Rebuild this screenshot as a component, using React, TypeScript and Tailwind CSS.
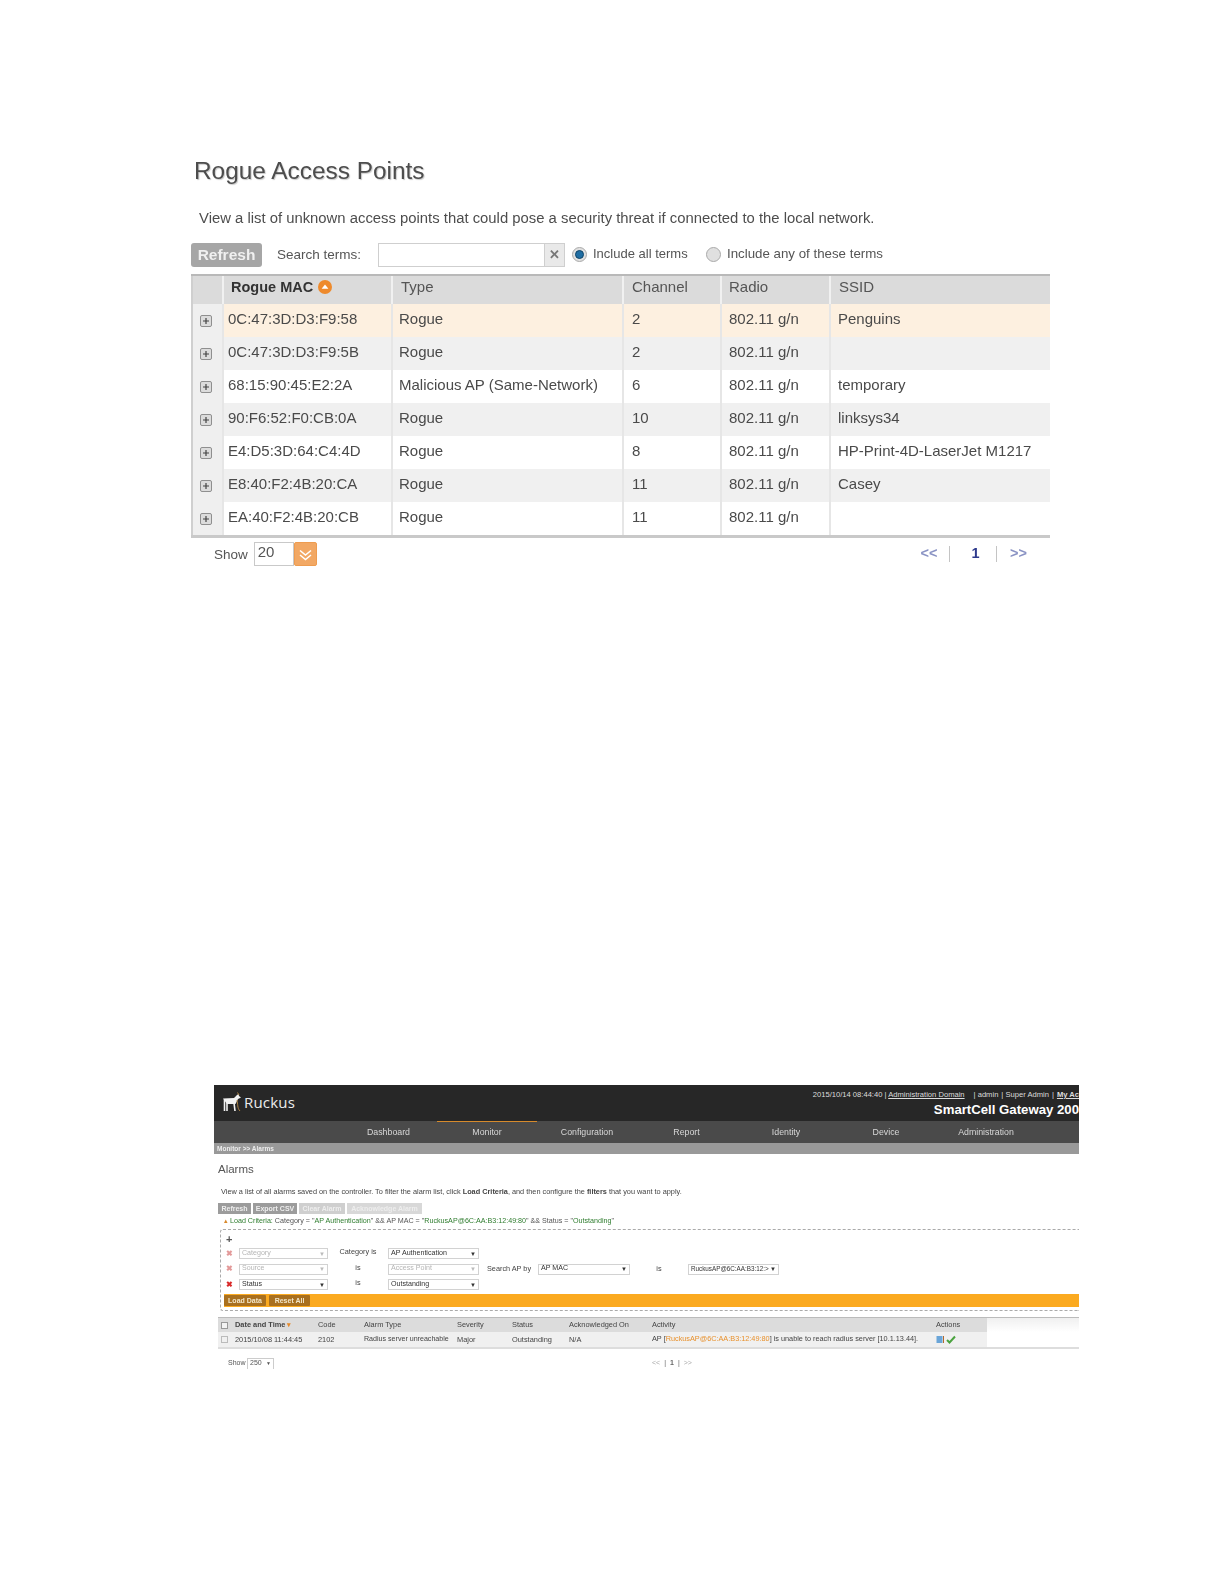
import React from 'react';

// 流氓接入点表格数据
const rogues = [
  { mac: '0C:47:3D:D3:F9:58', type: 'Rogue', channel: '2', ssid: 'Penguins' },
  { mac: '0C:47:3D:D3:F9:5B', type: 'Rogue', channel: '2', ssid: '' },
  { mac: '68:15:90:45:E2:2A', type: 'Malicious AP (Same-Network)', channel: '6', ssid: 'temporary' },
  { mac: '90:F6:52:F0:CB:0A', type: 'Rogue', channel: '10', ssid: 'linksys34' },
  { mac: 'E4:D5:3D:64:C4:4D', type: 'Rogue', channel: '8', ssid: 'HP-Print-4D-LaserJet M1217' },
  { mac: 'E8:40:F2:4B:20:CA', type: 'Rogue', channel: '11', ssid: 'Casey' },
  { mac: 'EA:40:F2:4B:20:CB', type: 'Rogue', channel: '11', ssid: '' },
];

const navItems = [
  { label: 'Dashboard', w: 'w-[97px]' },
  { label: 'Monitor', w: 'w-[100px]' },
  { label: 'Configuration', w: 'w-[100px]' },
  { label: 'Report', w: 'w-[99px]' },
  { label: 'Identity', w: 'w-[100px]' },
  { label: 'Device', w: 'w-[100px]' },
  { label: 'Administration', w: 'w-[100px]' },
];

function Expander() {
  return (
    <svg width="12" height="12" viewBox="0 0 12 12">
      <rect x="0.5" y="0.5" width="11" height="11" rx="1.5" fill="#dcdcdc" stroke="#8f8f8f" />
      <path d="M3 6h6M6 3v6" stroke="#444" strokeWidth="1.2" />
    </svg>
  );
}

function SortIcon() {
  return (
    <svg width="14" height="14" viewBox="0 0 14 14">
      <circle cx="7" cy="7" r="7" fill="#ee8a2c" />
      <path d="M3.6 8.8 7 4.6l3.4 4.2z" fill="#fff" />
    </svg>
  );
}

function RadioDot({ on }: { on: boolean }) {
  return (
    <span className="flex w-[15px] h-[15px] items-center justify-center rounded-full border border-[#a9a9a9] bg-[#e0e0e0]">
      {on && <span className="w-[9px] h-[9px] rounded-full bg-[#1f6da3] border border-[#0e4468]" />}
    </span>
  );
}

function RogueTable() {
  return (
    <div className="w-[859px] border-b-[3px] border-[#c9c9c9]">
      <div className="flex h-[30px] bg-[#dbdbdb] border-t-2 border-[#b9b9b9] text-[15px] text-[#555] leading-[22px]">
        <div className="w-[31px] border-l-2 border-[#cfcfcf]" />
        <div className="w-[169px] pl-[7px] border-l-2 border-[#f1f1f1] font-bold text-[14.5px] text-[#333]">
          <div className="flex items-center gap-[5px] h-[22px]">Rogue MAC <SortIcon /></div>
        </div>
        <div className="w-[231px] pl-[8px] border-l-2 border-[#f1f1f1]">Type</div>
        <div className="w-[98px] pl-[8px] border-l-2 border-[#f1f1f1]">Channel</div>
        <div className="w-[109px] pl-[7px] border-l-2 border-[#f1f1f1]">Radio</div>
        <div className="flex-1 pl-[8px] border-l-2 border-[#f1f1f1]">SSID</div>
      </div>
      {rogues.map((r, i) => {
        const bg = i === 0 ? 'bg-[#fdf0e0]' : i % 2 === 1 ? 'bg-[#f0f0f0]' : 'bg-white';
        return (
          <div key={r.mac} className={`flex h-[33px] items-center text-[15px] text-[#4a4a4a] ${bg}`}>
            <div className="w-[31px] h-full flex items-center justify-center bg-[#efefef] border-l-2 border-[#cfcfcf] pr-[3px]">
              <Expander />
            </div>
            <div className="w-[169px] h-full pl-[4px] flex items-center border-l-2 border-[#e6e6e6] pb-[3px]">{r.mac}</div>
            <div className="w-[231px] h-full pl-[6px] flex items-center border-l-2 border-[#e6e6e6] pb-[3px]">{r.type}</div>
            <div className="w-[98px] h-full pl-[8px] flex items-center border-l-2 border-[#e6e6e6] pb-[3px]">{r.channel}</div>
            <div className="w-[109px] h-full pl-[7px] flex items-center border-l-2 border-[#e6e6e6] pb-[3px]">802.11 g/n</div>
            <div className="flex-1 h-full pl-[7px] flex items-center border-l-2 border-[#e6e6e6] pb-[3px]">{r.ssid}</div>
          </div>
        );
      })}
    </div>
  );
}

function RoguePanel() {
  return (
    <section className="ml-[191px] w-[860px] blur-[0.3px]">
      <h1 className="ml-[3px] text-[24.4px] leading-[28px] text-[#4d4d4d] [text-shadow:1px_1px_1px_#c8c8c8]">Rogue Access Points</h1>
      <p className="ml-[8px] mt-[24px] text-[14.85px] leading-[18px] text-[#4d4d4d]">
        View a list of unknown access points that could pose a security threat if connected to the local network.
      </p>
      <div className="mt-[15px] h-[25px] flex items-center text-[13.5px] text-[#555]">
        <button className="w-[71px] h-[24px] rounded-[3px] bg-[#a6a6a6] text-[#f0f0f0] text-[15.5px] font-bold mt-[1px]">Refresh</button>
        <span className="ml-[15px] w-[101px] mt-[2px]">Search terms:</span>
        <div className="w-[187px] h-[24px] flex border border-[#cfcfcf]">
          <div className="flex-1 bg-white" />
          <div className="w-[20px] bg-[#e9e9e9] border-l border-[#cfcfcf] flex items-center justify-center text-[#777] text-[13px] font-bold">✕</div>
        </div>
        <span className="ml-[7px] -mt-[1px]"><RadioDot on /></span>
        <span className="ml-[6px] w-[113px] text-[13px] -mt-[1px]">Include all terms</span>
        <span className="-mt-[1px]"><RadioDot on={false} /></span>
        <span className="ml-[6px] text-[13.3px] -mt-[1px]">Include any of these terms</span>
      </div>
      <div className="mt-[7px]"><RogueTable /></div>
      <div className="flex items-center h-[26px] mt-[3px] text-[13.5px] text-[#555]">
        <span className="ml-[23px] mt-[3px]">Show</span>
        <div className="ml-[6px] w-[63px] h-[24px] flex">
          <div className="w-[40px] border border-[#c9c9c9] text-[15px] pl-[3px] leading-[18px]">20</div>
          <div className="w-[23px] rounded-[2px] bg-[#f2a864] border border-[#ee9c50] flex items-center justify-center">
            <svg width="15" height="15" viewBox="0 0 15 15" fill="none" stroke="#fff" strokeWidth="1.6">
              <path d="M2 3.5 7.5 8 13 3.5M2 8l5.5 4.5L13 8" />
            </svg>
          </div>
        </div>
        <div className="ml-auto mr-[11px] flex items-center font-bold text-[#8a93c4] text-[14.5px]">
          <span className="w-[40px] text-center">&lt;&lt;</span>
          <span className="w-[1px] h-[16px] bg-[#c4c4c4]" />
          <span className="w-[46px] pl-[5px] text-center text-[#2e3a8c]">1</span>
          <span className="w-[1px] h-[16px] bg-[#c4c4c4]" />
          <span className="w-[43px] text-center">&gt;&gt;</span>
        </div>
      </div>
    </section>
  );
}

function RuckusLogo() {
  return (
    <div className="flex items-center gap-[2px]">
      <svg width="20" height="22" viewBox="0 0 20 22" fill="none">
        <path d="M1 7.5 12 7l3-3 1.5-1 .5 2 2 1.5-3 1.5-1.5 3-1 2H5z" fill="#f2f2f2" />
        <path d="M2.5 8v12M5 11v9M12 12l1 8" stroke="#f2f2f2" strokeWidth="1.6" />
        <path d="M15 9c1 4 0 8 3 11M15.5 1.5 17 4" stroke="#b98a45" strokeWidth="0.9" />
      </svg>
      <span className="font-['Open_Sans',sans-serif] text-[15px] text-[#ececec] tracking-[0.2px]">Ruckus</span>
    </div>
  );
}

function Sel({ w, label, dim, size = 'text-[7.1px]' }: { w: string; label: string; dim?: boolean; size?: string }) {
  return (
    <div className={`${w} h-[11px] flex items-center justify-between border border-[#d2d2d2] px-[2px] ${size} leading-none ${dim ? 'text-[#b5b5b5]' : 'text-[#333]'}`}>
      <span className="whitespace-nowrap">{label}</span>
      <span className={`text-[6px] ${dim ? 'text-[#bbb]' : 'text-[#333]'}`}>▼</span>
    </div>
  );
}

function XMark({ dim }: { dim?: boolean }) {
  return <span className={`w-[13px] ml-[2px] font-bold text-[8px] leading-none ${dim ? 'text-[#e39a9a]' : 'text-[#d92a2a]'}`}>✖</span>;
}

function AlarmFilter() {
  return (
    <div className="ml-[6px] mt-[3px] h-[82px] border border-dashed border-r-0 border-[#aaa] rounded-l-[3px] text-[7.3px] text-[#444]">
      <div className="h-[18px] pl-[5px] pt-[2px] text-[11px] leading-[14px] text-[#555] font-bold">+</div>
      <div className="flex flex-col gap-[4.5px] pl-[3px]">
        <div className="flex items-center h-[11px]">
          <XMark dim />
          <Sel w="w-[89px]" label="Category" dim />
          <span className="w-[60px] text-center -mt-[2px]">Category is</span>
          <Sel w="w-[91px]" label="AP Authentication" />
        </div>
        <div className="flex items-center h-[11px]">
          <XMark dim />
          <Sel w="w-[89px]" label="Source" dim />
          <span className="w-[60px] text-center -mt-[2px]">is</span>
          <Sel w="w-[91px]" label="Access Point" dim />
          <span className="ml-[8px] w-[51px] whitespace-nowrap">Search AP by</span>
          <Sel w="w-[92px]" label="AP MAC" />
          <span className="w-[58px] text-center">is</span>
          <Sel w="w-[91px]" label="RuckusAP@6C:AA:B3:12:>" size="text-[6.3px]" />
        </div>
        <div className="flex items-center h-[11px]">
          <XMark />
          <Sel w="w-[89px]" label="Status" />
          <span className="w-[60px] text-center -mt-[2px]">is</span>
          <Sel w="w-[91px]" label="Outstanding" />
        </div>
      </div>
      <div className="mt-[4px] ml-[3px] h-[13px] bg-[#fbaa20] flex items-center gap-[3px] text-[7px] font-bold text-[#f3e6c8]">
        <span className="w-[42px] h-[11px] leading-[11px] text-center rounded-[1px] bg-[#a9701f]">Load Data</span>
        <span className="w-[41px] h-[11px] leading-[11px] text-center rounded-[1px] bg-[#a9701f]">Reset All</span>
      </div>
    </div>
  );
}

function AlarmTable() {
  return (
    <div className="mt-[6px] w-[861px] border-t border-[#bbb] border-b-2 border-b-[#ddd] text-[7.4px] text-[#444] whitespace-nowrap">
      <div className="flex h-[14px] items-center">
        <div className="flex w-[769px] h-full items-center bg-[#dcdcdc]">
          <div className="w-[17px] pl-[3px]"><span className="block w-[7px] h-[7px] border border-[#999] bg-[#f3f3f3]" /></div>
          <span className="w-[83px] font-bold">Date and Time <span className="text-[#e58a2c]">▾</span></span>
          <span className="w-[46px]">Code</span>
          <span className="w-[93px]">Alarm Type</span>
          <span className="w-[55px]">Severity</span>
          <span className="w-[57px]">Status</span>
          <span className="w-[83px]">Acknowledged On</span>
          <span className="w-[284px]">Activity</span>
          <span className="w-[51px]">Actions</span>
        </div>
        <div className="flex-1 h-full bg-gradient-to-b from-[#f0f0f0] to-white" />
      </div>
      <div className="flex h-[15px] items-center">
        <div className="flex w-[769px] h-full items-center bg-[#f0f0f0]">
          <div className="w-[17px] pl-[3px]"><span className="block w-[7px] h-[7px] border border-[#bbb]" /></div>
          <span className="w-[83px]">2015/10/08 11:44:45</span>
          <span className="w-[46px]">2102</span>
          <span className="w-[93px] text-[7.1px]">Radius server unreachable</span>
          <span className="w-[55px]">Major</span>
          <span className="w-[57px]">Outstanding</span>
          <span className="w-[83px]">N/A</span>
          <span className="w-[284px] text-[7.3px]">AP [<span className="text-[#e8912d]">RuckusAP@6C:AA:B3:12:49:80</span>] is unable to reach radius server [10.1.13.44].</span>
          <span className="w-[51px] flex items-center gap-[1px]">
            <svg width="9" height="9" viewBox="0 0 9 9"><rect x="0.5" y="1" width="6" height="7" fill="#6aa5d8" /><path d="M7.5 1v7" stroke="#b5692a" /></svg>
            <svg width="10" height="9" viewBox="0 0 10 9" fill="none"><path d="M1 5l2.5 2.5L9 1.5" stroke="#4ba33f" strokeWidth="2" /></svg>
          </span>
        </div>
        <div className="flex-1" />
      </div>
    </div>
  );
}

function AlarmPanel() {
  return (
    <div className="ml-[214px] w-[865px] mt-[518px] overflow-hidden">
      <section className="blur-[0.45px]">
        <div className="h-[36px] bg-[#272727] flex justify-between pl-[8px] overflow-hidden">
          <div className="pt-[6px]"><RuckusLogo /></div>
          <div className="flex flex-col items-end">
            <div className="pt-[5px] h-[15px] text-[7.6px] text-[#ddd] whitespace-nowrap leading-[10px]">
              2015/10/14 08:44:40 | <span className="underline">Administration Domain</span>
              <span className="ml-[9px]">| admin</span>
              <span className="ml-[3px]">| Super Admin</span>
              <span className="mx-[3px]">|</span>
              <span className="underline font-bold">My Ac</span>
            </div>
            <div className="text-[13.2px] font-bold text-white leading-[20px] whitespace-nowrap">SmartCell Gateway 200</div>
          </div>
        </div>
        <div className="h-[22px] bg-[#4a4a4a] flex pl-[126px] text-[8.8px] text-[#d8d8d8]">
          {navItems.map(n => (
            <div key={n.label} className={`${n.w} text-center ${n.label === 'Monitor' ? 'border-t border-[#d68a2c] leading-[21px]' : 'leading-[23px]'}`}>{n.label}</div>
          ))}
        </div>
        <div className="h-[11px] bg-[#999] pl-[3px] text-[6.5px] font-bold leading-[11px] text-[#eee]">Monitor &gt;&gt; Alarms</div>
        <div className="ml-[4px] mt-[8px] text-[11.5px] leading-[14px] text-[#555]">Alarms</div>
        <p className="ml-[7px] mt-[11px] text-[7.33px] leading-[9px] text-[#444] whitespace-nowrap">
          View a list of all alarms saved on the controller. To filter the alarm list, click <b>Load Criteria</b>, and then configure the <b>filters</b> that you want to apply.
        </p>
        <div className="ml-[4px] mt-[7px] flex gap-[2px] h-[11px] text-[7px] font-bold leading-[11px] text-center text-[#eee]">
          <span className="w-[33px] bg-[#9c9c9c]">Refresh</span>
          <span className="w-[44px] bg-[#9c9c9c]">Export CSV</span>
          <span className="w-[46px] bg-[#cfcfcf]">Clear Alarm</span>
          <span className="w-[75px] bg-[#d8d8d8]">Acknowledge Alarm</span>
        </div>
        <div className="ml-[10px] mt-[2px] h-[10px] text-[7.15px] leading-[10px] text-[#555] whitespace-nowrap">
          <span className="text-[#d98a2c]">▴</span> <span className="text-[#2f7d2f]">Load Criteria:</span> Category = "<span className="text-[#2f7d2f]">AP Authentication</span>" &amp;&amp; AP MAC = "<span className="text-[#2f7d2f]">RuckusAP@6C:AA:B3:12:49:80</span>" &amp;&amp; Status = "<span className="text-[#2f7d2f]">Outstanding</span>"
        </div>
        <AlarmFilter />
        <div className="ml-[4px]"><AlarmTable /></div>
        <div className="flex items-center h-[12px] mt-[8px] text-[7px] text-[#555]">
          <span className="ml-[14px] w-[19px]">Show</span>
          <span className="w-[27px] h-[11px] flex items-center justify-between px-[2px] border-x border-t border-[#ccc] text-[7px]">250 <span className="text-[5px]">▼</span></span>
          <div className="ml-[378px] flex items-center text-[#aaa] gap-[4px]">
            <span>&lt;&lt;</span><span className="text-[#666]">|</span><span className="font-bold text-[#666]">1</span><span className="text-[#666]">|</span><span>&gt;&gt;</span>
          </div>
        </div>
      </section>
    </div>
  );
}

export default function App() {
  return (
    <div className="w-[1224px] h-[1584px] overflow-hidden bg-white pt-[157px] font-['Liberation_Sans',Arial,sans-serif]">
      <RoguePanel />
      <AlarmPanel />
    </div>
  );
}
